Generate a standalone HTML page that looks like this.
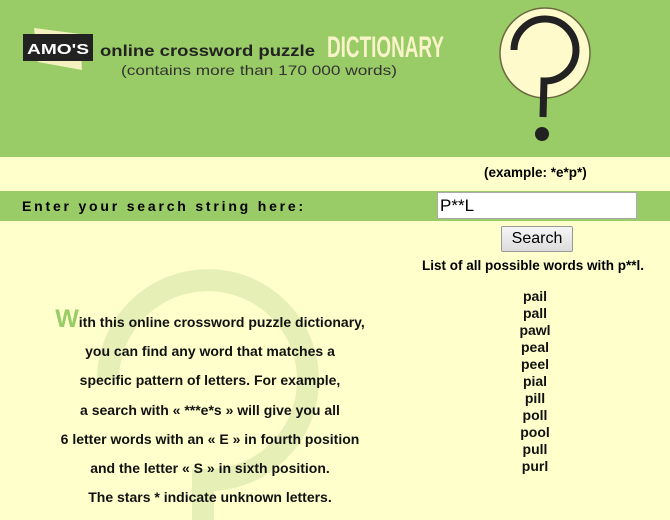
<!DOCTYPE html>
<html><head><style>
body{margin:0;width:670px;height:520px;background:#ffffcc;font-family:"Liberation Sans",Arial,sans-serif;position:relative;overflow:hidden}
.hdr{position:absolute;left:0;top:0;width:670px;height:157px;background:#99cc66}
.bar{position:absolute;left:0;top:191px;width:670px;height:30px;background:#99cc66}
.t{position:absolute;font-weight:bold;color:#000;font-size:13px;white-space:nowrap}
.txt{position:absolute;left:20px;width:380px;text-align:center;font-weight:bold;font-size:14px;color:#111;white-space:nowrap}
.txt div{height:29.2px;line-height:29.2px}
.list{position:absolute;left:490px;width:90px;top:288px;text-align:center;font-weight:bold;font-size:14px;line-height:17px;color:#111}
</style></head><body>
<div class="hdr"></div>
<svg style="position:absolute;left:0;top:0" width="670" height="520">
<path d="M108 380 A100 100 0 1 1 203 480 L203 520" fill="none" stroke="#e6efb6" stroke-width="22"/>
<polygon points="34,28 80,34 82,70 38,62" fill="#f5f0c0"/>
<rect x="23" y="34" width="70" height="27" fill="#222"/>
<text x="27" y="54" font-family="Liberation Sans" font-weight="bold" font-size="15" fill="#fff" textLength="62" lengthAdjust="spacingAndGlyphs">AMO'S</text>
<text x="100" y="56" font-family="Liberation Sans" font-weight="bold" font-size="16" fill="#222" textLength="215" lengthAdjust="spacingAndGlyphs">online crossword puzzle</text>
<text x="121" y="75" font-family="Liberation Sans" font-size="14" fill="#333" textLength="276" lengthAdjust="spacingAndGlyphs">(contains more than 170 000 words)</text>
<text x="327" y="57" font-family="Liberation Sans" font-weight="bold" font-size="30" fill="#f8f3c8" textLength="117" lengthAdjust="spacingAndGlyphs">DICTIONARY</text>
<circle cx="545" cy="53" r="45" fill="#fffacc" stroke="#6a6a40" stroke-width="1.5"/>
<path d="M514 50 A31 31 0 1 1 544 81 L543 117" fill="none" stroke="#222" stroke-width="7"/>
<circle cx="542" cy="134" r="7" fill="#222"/>
</svg>
<div class="t" style="left:484px;top:165px;font-size:13.5px">(example: *e*p*)</div>
<div class="bar"></div>
<div class="t" style="left:22px;top:198px;font-size:14px;letter-spacing:2.8px">Enter your search string here:</div>
<div style="position:absolute;left:437px;top:192px;background:#fff;border:1px solid #aaa;font-size:17px;line-height:25px;padding-left:2px;box-sizing:border-box;width:200px;height:27px">P**L</div>
<div style="position:absolute;left:501px;top:226px;width:72px;height:26px;box-sizing:border-box;border:1px solid #999;border-radius:2px;background:linear-gradient(#f6f6f6,#dcdcdc);font-size:16px;text-align:center;line-height:24px">Search</div>
<div class="t" style="left:422px;top:258px;font-size:13.5px">List of all possible words with p**l.</div>
<div class="txt" style="top:308px">
<div><span style="color:#99cc66;font-size:25px;line-height:10px">W</span>ith this online crossword puzzle dictionary,</div>
<div>you can find any word that matches a</div>
<div>specific pattern of letters. For example,</div>
<div>a search with « ***e*s » will give you all</div>
<div>6 letter words with an « E » in fourth position</div>
<div>and the letter « S » in sixth position.</div>
<div>The stars * indicate unknown letters.</div>
</div>
<div class="list">pail<br>pall<br>pawl<br>peal<br>peel<br>pial<br>pill<br>poll<br>pool<br>pull<br>purl</div>
</body></html>
